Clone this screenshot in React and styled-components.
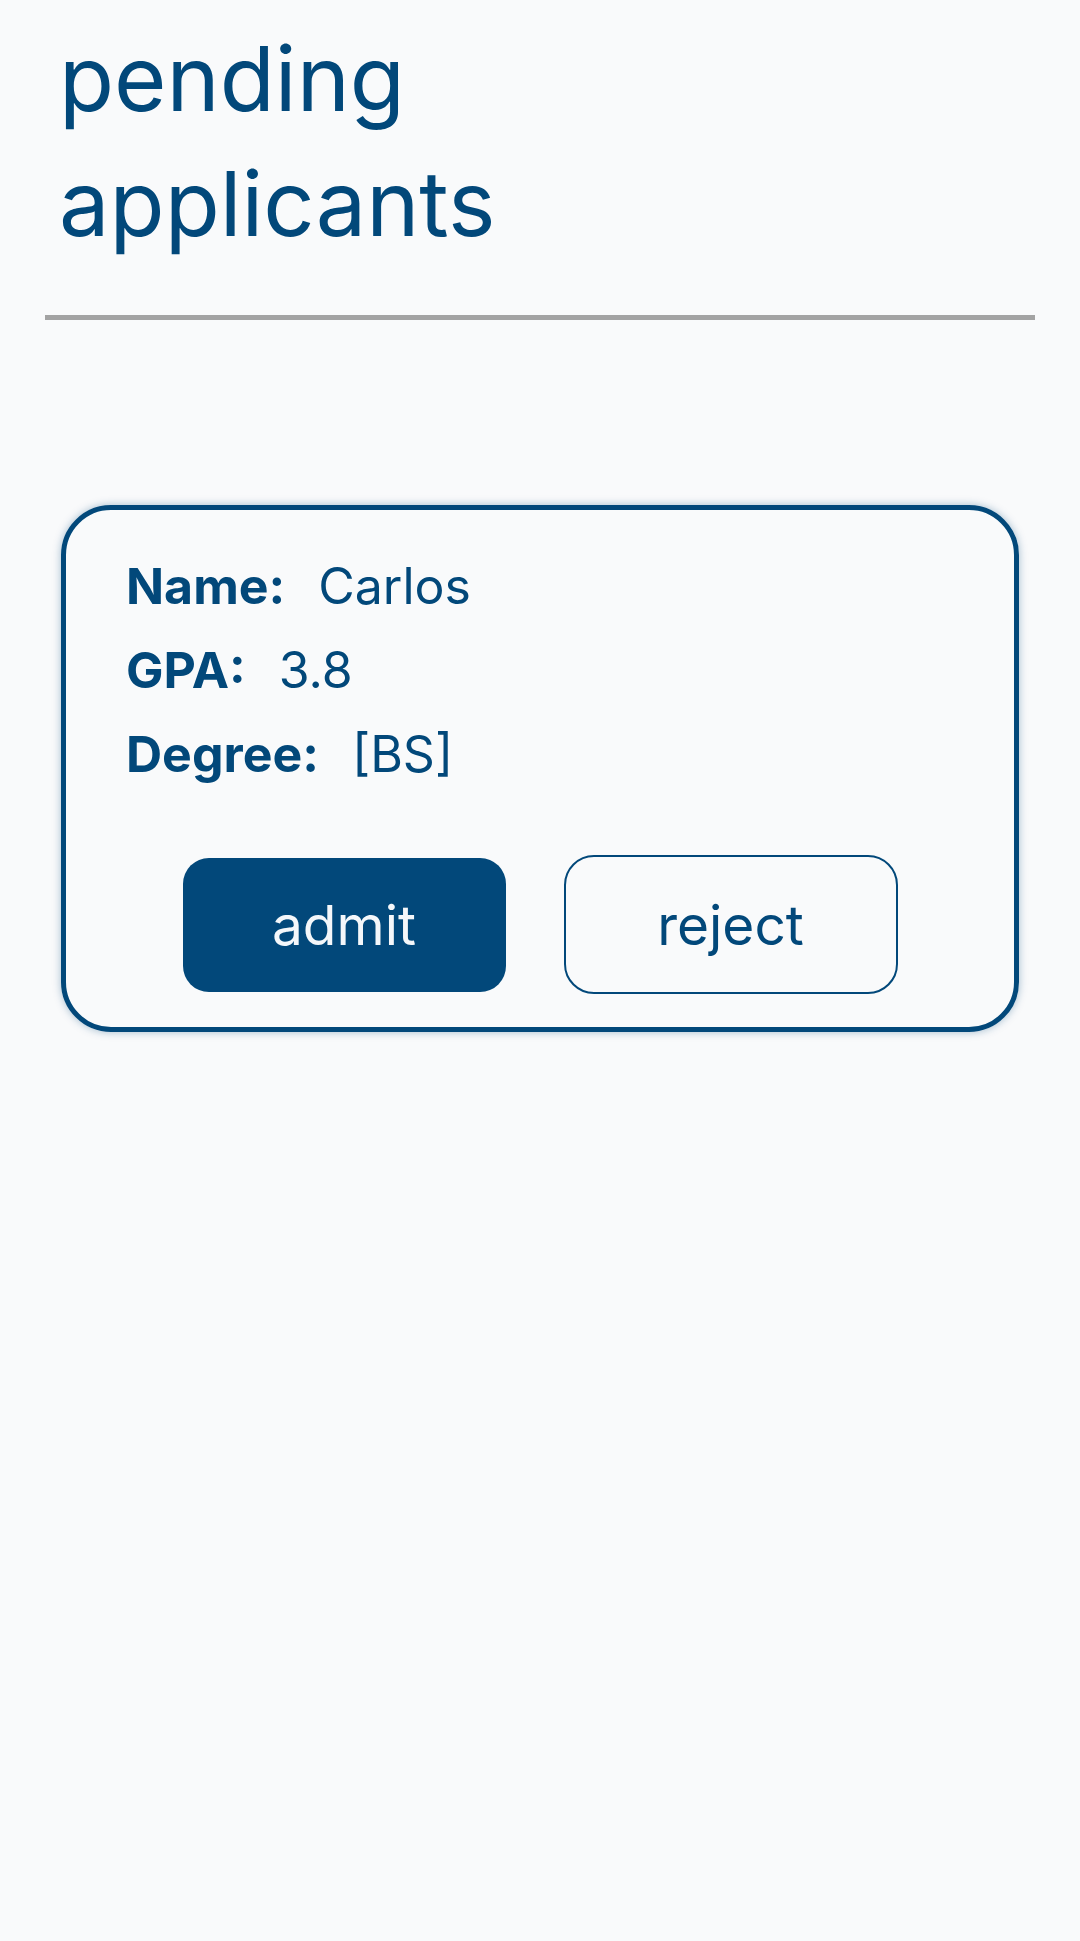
import React from 'react';
import styled, { createGlobalStyle } from 'styled-components';

const GlobalStyle = createGlobalStyle`
  html, body {
    margin: 0;
    padding: 0;
    background: #f9fafb;
    font-family: 'Inter', 'Noto Sans', sans-serif;
  }
`;

const Page = styled.div`
  min-height: 1941px;
  background: #f9fafb;
  padding-top: 16px;
  box-sizing: border-box;
`;

const Title = styled.h1`
  margin: 0 0 0 59px;
  width: 470px;
  font-size: 90px;
  line-height: 125px;
  font-weight: 400;
  color: #02487a;
`;

const Divider = styled.div`
  height: 5px;
  margin: 49px 45px 0;
  background: #a3a3a3;
`;

const Card = styled.div`
  margin: 185px 61px 0;
  border: 5px solid #02487a;
  border-radius: 50px;
  box-shadow: 0 0 8px rgba(2, 72, 122, 0.35);
  padding: 34px 60px 33px;
`;

const Row = styled.div`
  display: flex;
  gap: 33px;
  font-size: 50px;
  line-height: 84px;
  color: #02487a;
`;

const Label = styled.span`
  font-weight: 700;
`;

const Value = styled.span`
  font-weight: 400;
`;

const Actions = styled.div`
  display: flex;
  justify-content: center;
  align-items: center;
  gap: 58px;
  margin-top: 59px;
`;

const Button = styled.button`
  display: flex;
  align-items: center;
  justify-content: center;
  box-sizing: border-box;
  width: ${(p) => (p.$outline ? '334px' : '323px')};
  height: ${(p) => (p.$outline ? '139px' : '134px')};
  border-radius: ${(p) => (p.$outline ? '30px' : '26px')};
  border: ${(p) => (p.$outline ? '2.5px solid #02487a' : 'none')};
  background: ${(p) => (p.$outline ? 'transparent' : '#02487a')};
  color: ${(p) => (p.$outline ? '#02487a' : '#f4f7fa')};
  font-family: 'Inter', 'Noto Sans', sans-serif;
  font-size: 55px;
  font-weight: 400;
  padding: 0;
  cursor: pointer;
`;

const applicant = { name: 'Carlos', gpa: '3.8', degree: '[BS]' };

const App = () => (
  <Page>
    <GlobalStyle />
    <Title>pending applicants</Title>
    <Divider />
    <Card>
      <Row>
        <Label>Name:</Label>
        <Value>{applicant.name}</Value>
      </Row>
      <Row>
        <Label>GPA:</Label>
        <Value>{applicant.gpa}</Value>
      </Row>
      <Row>
        <Label>Degree:</Label>
        <Value>{applicant.degree}</Value>
      </Row>
      <Actions>
        <Button>admit</Button>
        <Button $outline>reject</Button>
      </Actions>
    </Card>
  </Page>
);

export default App;
